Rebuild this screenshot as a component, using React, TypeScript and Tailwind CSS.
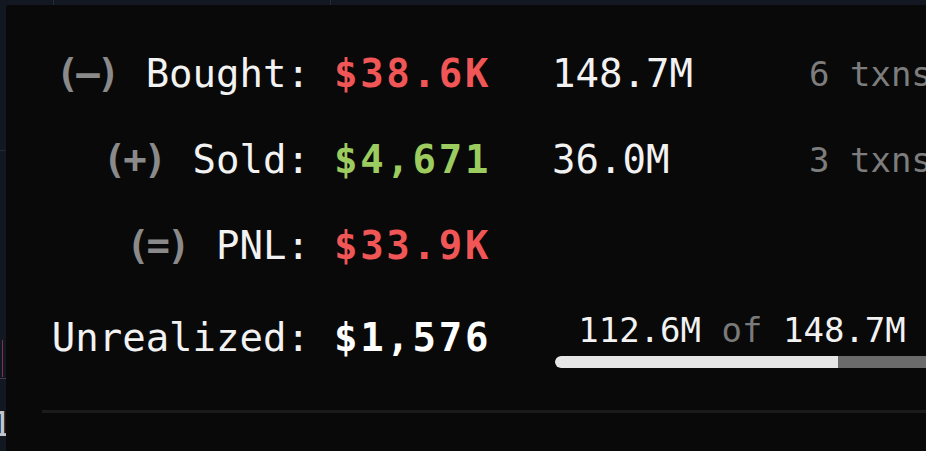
import React from 'react';

const mono = { fontFamily: '"DejaVu Sans Mono", "Liberation Mono", monospace' };

type Row = {
  sign: string;
  label: string;
  value: string;
  tone: string;
  amount?: string;
  txns?: string;
};

const rows: Row[] = [
  { sign: '(–)', label: 'Bought:', value: '$38.6K', tone: 'text-[#f05656]', amount: '148.7M', txns: '6 txns' },
  { sign: '(+)', label: 'Sold:', value: '$4,671', tone: 'text-[#9ccc5f]', amount: '36.0M', txns: '3 txns' },
  { sign: '(=)', label: 'PNL:', value: '$33.9K', tone: 'text-[#f05656]' },
];

export default function App() {
  const held = 112.6;
  const total = 148.7;
  const pct = (held / total) * 100;

  return (
    <div className="relative w-[926px] h-[451px] overflow-hidden bg-[#131722]" style={mono}>
      {/* chart bits peeking out behind the panel */}
      <div className="absolute left-[53px] top-0 w-px h-[5px] bg-[#262b38]" />
      <div className="absolute left-[330px] top-0 w-px h-[5px] bg-[#262b38]" />
      <div className="absolute left-0 top-[150px] w-[6px] h-px bg-[#252a35]" />
      <div className="absolute left-[2px] top-[340px] w-px h-[37px] bg-[#7a3446]" />
      <div className="absolute left-0 top-[378px] w-[6px] h-px bg-[#3a3f4a]" />
      <div className="absolute left-[-9px] top-[404px] text-[34px] leading-[40px] text-[#c3c6ce]">1</div>

      <div className="absolute left-[6px] top-[5px] w-[940px] h-[460px] rounded-tl-[3px] bg-[#090909] pt-[26px]">
        {rows.map((r) => (
          <div key={r.label} className="flex h-[86px] text-[39px] leading-[86px] whitespace-pre">
            <div className="w-[304px] text-right text-[#f2f2f2]">
              <span className="inline-block mr-[5px] font-bold tracking-[-3px] text-[#8a8a8a]">{r.sign}</span>
              {' '}
              {r.label}
            </div>
            <div className={`w-[217px] pl-[24px] font-bold tracking-[2.7px] ${r.tone}`}>{r.value}</div>
            <div className="w-[282px] pl-[25px] text-[#f2f2f2]">{r.amount}</div>
            <div className="text-[34px] text-[#7d7d7d]">{r.txns}</div>
          </div>
        ))}

        <div className="mt-[6px] flex h-[86px] text-[39px] leading-[86px] whitespace-pre">
          <div className="w-[304px] text-right text-[#f2f2f2]">Unrealized:</div>
          <div className="w-[245px] pl-[24px] font-bold tracking-[2.7px] text-white">$1,576</div>
          <div className="w-[374px] flex flex-col pt-[15px]">
            <div className="text-center text-[34px] leading-[40px] text-[#f2f2f2]">
              {held}M <span className="text-[#7a7a7a]">of</span> {total}M
            </div>
            <div className="mt-[6px] h-[12px] w-full rounded-l-full bg-[#6b6b6b] overflow-hidden">
              <div className="h-full bg-[#e6e6e6] rounded-l-full" style={{ width: `${pct}%` }} />
            </div>
          </div>
        </div>

        <div className="ml-[36px] mt-[29px] h-[3px] bg-[#1b1b1b]" />
      </div>
    </div>
  );
}
